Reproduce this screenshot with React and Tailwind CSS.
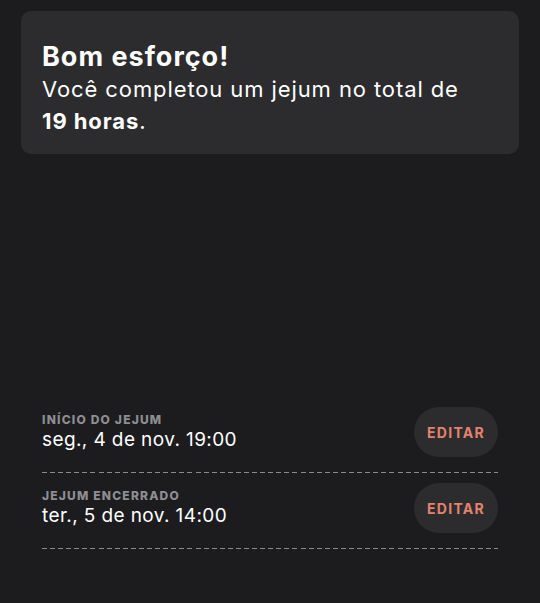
export default function App() {
  const rows = [
    { label: "INÍCIO DO JEJUM", date: "seg., 4 de nov. 19:00" },
    { label: "JEJUM ENCERRADO", date: "ter., 5 de nov. 14:00" },
  ];
  return (
    <div className="w-[540px] h-[603px] bg-[#1c1c1e] overflow-hidden font-['Inter',sans-serif] text-white">
      <div className="pt-[11px] px-[21px]">
        <div className="bg-[#2c2c2e] rounded-[10px] h-[143px] pl-[21px] pt-[30px]">
          <div className="text-[27px] font-bold leading-[32px] tracking-[1px]">Bom esforço!</div>
          <div className="text-[22px] leading-[32px] tracking-[0.9px]">
            Você completou um jejum no total de
            <br />
            <span className="font-bold">19 horas</span>.
          </div>
        </div>
      </div>
      <div className="mt-[243px] pl-[42px] pr-[42px]">
        {rows.map((r, i) => (
          <div key={i}>
            <div className="flex items-center justify-between pt-[10px] pb-[15px]">
              <div className="flex flex-col">
                <div className="text-[12px] font-extrabold tracking-[1.2px] text-[#8e8e93] leading-[14px]">
                  {r.label}
                </div>
                <div className="text-[19px] leading-[24px] mt-[1px] text-white tracking-[0.4px]">{r.date}</div>
              </div>
              <button className="w-[84px] h-[50px] rounded-full bg-[#2c2c2e] text-[#e3826f] text-[14px] font-bold tracking-[1.3px]">
                EDITAR
              </button>
            </div>
            <div className="h-px bg-[repeating-linear-gradient(to_right,#8a8a8e_0px,#8a8a8e_5px,transparent_5px,transparent_8.08px)]" />
          </div>
        ))}
      </div>
    </div>
  );
}
